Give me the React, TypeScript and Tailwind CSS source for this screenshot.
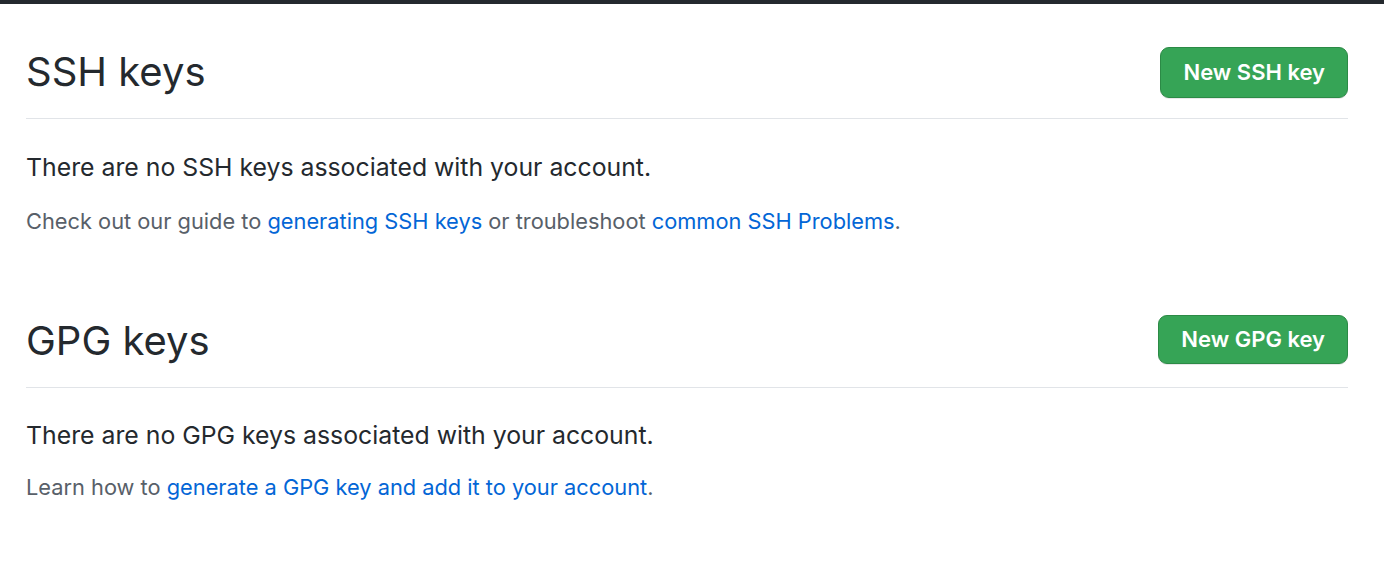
export default function App() {
  return (
    <div className="min-h-screen bg-white font-['Inter',sans-serif] text-[#24292e]">
      <div className="h-[4px] bg-[#24292e]" />
      <div className="pl-[26px] pr-[36px]">
        <section className="pt-[42px]">
          <div className="flex items-center justify-between border-b border-[#e1e4e8] pb-[20px]">
            <h2 className="text-[40px] leading-[52px] font-normal">SSH keys</h2>
            <button className="h-[51px] rounded-[9px] border border-[#2c8a46] bg-[#36a456] px-[22px] text-[22px] font-semibold text-white shadow-[0_1px_0_rgba(27,31,35,0.1)]">
              New SSH key
            </button>
          </div>
          <p className="mt-[32px] text-[24.8px] leading-[32px]">
            There are no SSH keys associated with your account.
          </p>
          <p className="mt-[24px] text-[21.8px] leading-[28px] text-[#586069]">
            Check out our guide to{" "}
            <a className="text-[#0366d6]">generating SSH keys</a> or troubleshoot{" "}
            <a className="text-[#0366d6]">common SSH Problems</a>.
          </p>
        </section>
        <section className="pt-[80px]">
          <div className="flex items-center justify-between border-b border-[#e1e4e8] pb-[20px]">
            <h2 className="text-[40px] leading-[52px] font-normal">GPG keys</h2>
            <button className="mb-[3px] h-[49px] rounded-[9px] border border-[#2c8a46] bg-[#36a456] px-[22px] text-[22px] font-semibold text-white shadow-[0_1px_0_rgba(27,31,35,0.1)]">
              New GPG key
            </button>
          </div>
          <p className="mt-[31px] text-[24.8px] leading-[32px]">
            There are no GPG keys associated with your account.
          </p>
          <p className="mt-[22px] text-[21.8px] leading-[28px] text-[#586069]">
            Learn how to{" "}
            <a className="text-[#0366d6]">generate a GPG key and add it to your account</a>.
          </p>
        </section>
      </div>
    </div>
  );
}
